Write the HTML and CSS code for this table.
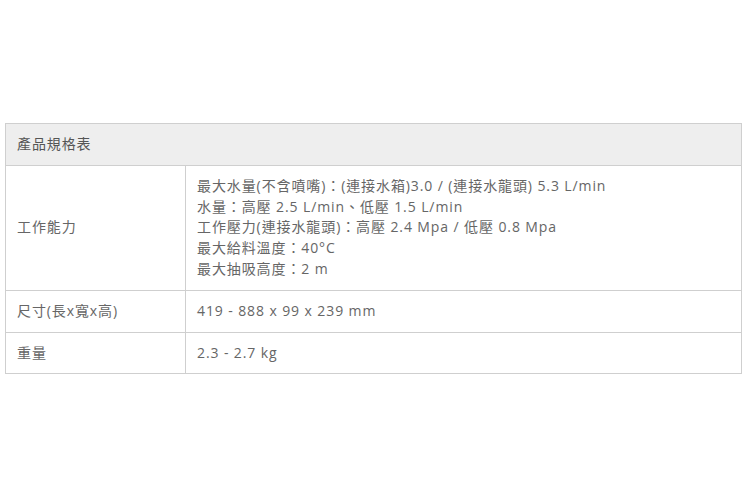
FILE: index.html
```html
<!DOCTYPE html>
<html lang="zh-Hant">
<head>
<meta charset="utf-8">
<link rel="stylesheet" href="styles.css">
</head>
<body>
<div class="wrap">
  <table class="spec">
    <thead>
      <tr><th colspan="2">產品規格表</th></tr>
    </thead>
    <tbody>
      <tr>
        <td class="label">工作能力</td>
        <td>最大水量(不含噴嘴)：(連接水箱)3.0 / (連接水龍頭) 5.3 L/min<br>水量：高壓 2.5 L/min、低壓 1.5 L/min<br>工作壓力(連接水龍頭)：高壓 2.4 Mpa / 低壓 0.8 Mpa<br>最大給料溫度：40°C<br>最大抽吸高度：2 m</td>
      </tr>
      <tr>
        <td class="label">尺寸(長x寬x高)</td>
        <td>419 - 888 x 99 x 239 mm</td>
      </tr>
      <tr>
        <td class="label">重量</td>
        <td>2.3 - 2.7 kg</td>
      </tr>
    </tbody>
  </table>
</div>
</body>
</html>
```

FILE: styles.css
```css
html, body {
  margin: 0;
  padding: 0;
  background: #fff;
}
.wrap {
  padding: 123px 8px 0 5px;
}
.spec {
  width: 737px;
  border-collapse: collapse;
  font-family: "Open Sans", "Noto Sans CJK TC", sans-serif;
  font-size: 14px;
  line-height: 20.8px;
  letter-spacing: 0.9px;
  color: #666;
}
.spec th,
.spec td {
  border: 1px solid #cfcfcf;
  padding: 10px 11px;
  text-align: left;
  vertical-align: middle;
}
.spec th {
  background: #eeeeee;
  font-weight: normal;
  color: #555;
}
.spec td.label {
  width: 157px;
}
```
